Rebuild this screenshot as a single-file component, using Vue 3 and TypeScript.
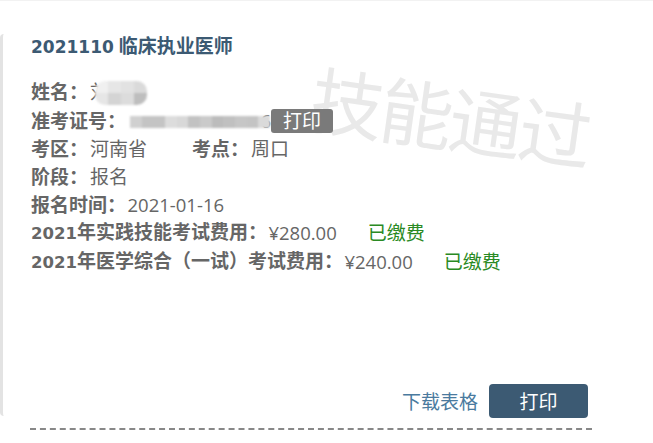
<script setup lang="ts">
const nameCells: string[] = ['#f0f0f0', '#e6e6e6', '#e2e2e2', '#dadada', '#e6e6e6', '#d4d4d4', '#dcdcdc', '#bebebe']
const idCells: string[] = ['#d0d0d0', '#c4c4c4', '#c4c4c4', '#dcdcdc', '#d8d8d8', '#c2c2c2', '#cacaca', '#bcbcbc', '#c0c0c0', '#c6c6c6', '#c4c4c4', '#dadada']
</script>

<template>
  <div class="page">
    <div class="card">
      <h1 class="title"><span class="bnum big">2021110</span> 临床执业医师</h1>
      <div class="rows">
        <div class="row">
          <b>姓名：</b><span class="v1">刘</span>
        </div>
        <div class="row">
          <b>准考证号：</b><span class="idno">6</span><span class="tag">打印</span>
        </div>
        <div class="row">
          <b>考区：</b><span class="v1">河南省</span><b class="second">考点：</b><span class="v1">周口</span>
        </div>
        <div class="row">
          <b>阶段：</b><span class="v1">报名</span>
        </div>
        <div class="row">
          <b>报名时间：</b><span class="v2">2021-01-16</span>
        </div>
        <div class="row">
          <b><span class="bnum">2021</span>年实践技能考试费用：</b><span class="v2">¥280.00</span><span class="paid">已缴费</span>
        </div>
        <div class="row">
          <b><span class="bnum">2021</span>年医学综合（一试）考试费用：</b><span class="v2">¥240.00</span><span class="paid">已缴费</span>
        </div>
      </div>
      <div class="actions">
        <a class="download">下载表格</a>
        <button class="print">打印</button>
      </div>
      <div class="stamp">技能通过</div>
      <div class="mosaic name-mask">
        <i v-for="(c, i) in nameCells" :key="i" :style="{ background: c }"></i>
      </div>
      <div class="mosaic id-mask">
        <i v-for="(c, i) in idCells" :key="i" :style="{ background: c }"></i>
      </div>
    </div>
    <div class="dash"></div>
  </div>
</template>

<style scoped>
.page {
  width: 653px;
  height: 443px;
  box-sizing: border-box;
  border-top: 1px solid #f2f2f2;
  padding-top: 33px;
  overflow: hidden;
  font-family: "Open Sans", "Noto Sans CJK SC", sans-serif;
  color: #666;
  font-size: 19px;
  background: #fff;
}
.card {
  position: relative;
  height: 382px;
  width: 592px;
  box-sizing: border-box;
  border-left: 3px solid #e3e3e3;
  border-radius: 4px 0 0 4px;
  padding-left: 28px;
}
.title {
  margin: 0;
  font-size: 19px;
  line-height: 24px;
  font-weight: 700;
  color: #3c5a73;
}
.bnum {
  font-family: "DejaVu Sans", sans-serif;
  font-size: 16.5px;
  font-weight: 700;
}
.bnum.big {
  font-size: 17px;
}
.rows {
  margin-top: 19.4px;
}
.row {
  height: 28.2px;
  line-height: 28px;
  display: flex;
  align-items: center;
  white-space: nowrap;
}
.row b {
  font-weight: 700;
  color: #666;
}
.v1 {
  margin-left: 2px;
}
.v2 {
  margin-left: 1.5px;
  font-size: 18.5px;
}
.second {
  margin-left: 45px;
}
.idno {
  width: 145px;
  text-align: right;
  font-size: 18.5px;
}
.tag {
  position: relative;
  z-index: 1;
  width: 62px;
  height: 24px;
  line-height: 24px;
  text-align: center;
  background: #7a7a7a;
  color: #fff;
  border-radius: 3px;
}
.paid {
  color: #2a8a24;
  margin-left: 31px;
}
.actions {
  position: absolute;
  right: 4px;
  top: 350px;
  display: flex;
  align-items: center;
  gap: 11px;
}
.download {
  color: #4a7a9e;
}
.print {
  width: 99px;
  height: 34px;
  padding: 0;
  border: none;
  border-radius: 4px;
  background: #3c5a73;
  color: #fff;
  font: inherit;
}
.stamp {
  position: absolute;
  left: 307px;
  top: 42px;
  font-size: 73px;
  line-height: 84px;
  letter-spacing: -3px;
  color: #e9e9e9;
  transform: rotate(8deg);
  white-space: nowrap;
  pointer-events: none;
  font-weight: 400;
}
.mosaic {
  position: absolute;
  display: grid;
  filter: blur(1.2px);
}
.mosaic i {
  display: block;
}
.name-mask {
  left: 92px;
  top: 47px;
  width: 52px;
  height: 24px;
  grid-template-columns: repeat(4, 1fr);
  grid-template-rows: repeat(2, 1fr);
  border-radius: 10px;
  overflow: hidden;
}
.id-mask {
  left: 127px;
  top: 82px;
  width: 140px;
  height: 12px;
  grid-template-columns: repeat(12, 1fr);
}
.dash {
  width: 562px;
  margin-left: 30px;
  margin-top: 12px;
  border-top: 2px dashed #888;
}
</style>
